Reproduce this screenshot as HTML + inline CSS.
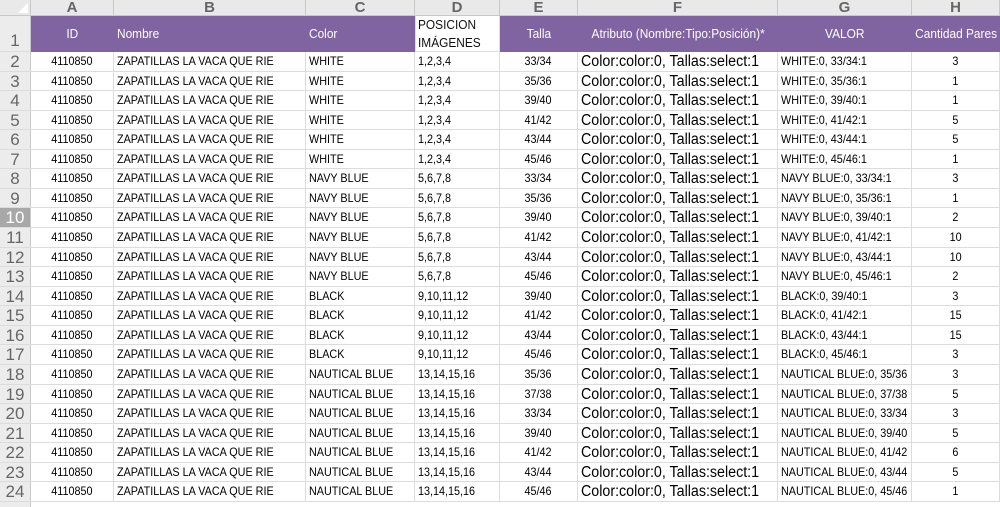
<!DOCTYPE html>
<html><head><meta charset="utf-8"><style>
*{margin:0;padding:0;box-sizing:border-box}
body{width:1000px;height:506px;overflow:hidden;background:#fff;font-family:"Liberation Sans",sans-serif;position:relative}
.r{position:absolute;left:0;width:1000px;height:19.56px;border-bottom:1px solid #dcdcdc}
.c{position:absolute;top:0;height:100%;border-right:1px solid #dcdcdc;font-size:12px;color:#000;line-height:19px;white-space:nowrap;overflow:hidden}
.c span{display:inline-block;transform:scaleX(.9);transform-origin:left center}
.ctr{text-align:center}.ctr span{transform-origin:center}
.h{background:#ececec;color:#666;font-size:17px;text-align:center;border-right:1px solid #c8c8c8}
.h span{transform:none}
.a{left:31px;width:83px}.b{left:114px;width:192px;padding-left:3px}.cc{left:306px;width:109px;padding-left:3px}
.d{left:415px;width:85px;padding-left:3px}.e{left:500px;width:78px}.f{left:578px;width:200px;padding-left:3px;font-size:15.5px}
.f span{transform:scaleX(.92)}
.g{left:778px;width:134px;padding-left:3px}.hh{left:912px;width:88px}
.rn{left:0;width:31px}
.sel{background:#a8a8a8;color:#fff}
.hd span{display:inline-block;transform:scaleX(.95)}
</style></head><body>
<div style="position:absolute;left:0;top:0;width:1000px;height:16px;background:#e9e9e9;border-bottom:1px solid #c8c8c8"></div>
<div style="position:absolute;left:0;top:0;width:31px;height:16px;border-right:1px solid #c8c8c8"></div>
<div style="position:absolute;left:18px;top:3px;width:0;height:0;border-left:10px solid transparent;border-bottom:10px solid #fff"></div>
<div style="position:absolute;top:0;height:16px;width:1000px;font-size:15px;font-weight:bold;color:#666;line-height:16px">
<div style="position:absolute;left:31px;width:83px;text-align:center;border-right:1px solid #c8c8c8;height:16px">A</div>
<div style="position:absolute;left:114px;width:192px;text-align:center;border-right:1px solid #c8c8c8;height:16px">B</div>
<div style="position:absolute;left:306px;width:109px;text-align:center;border-right:1px solid #c8c8c8;height:16px">C</div>
<div style="position:absolute;left:415px;width:85px;text-align:center;border-right:1px solid #c8c8c8;height:16px">D</div>
<div style="position:absolute;left:500px;width:78px;text-align:center;border-right:1px solid #c8c8c8;height:16px">E</div>
<div style="position:absolute;left:578px;width:200px;text-align:center;border-right:1px solid #c8c8c8;height:16px">F</div>
<div style="position:absolute;left:778px;width:134px;text-align:center;border-right:1px solid #c8c8c8;height:16px">G</div>
<div style="position:absolute;left:912px;width:88px;text-align:center;border-right:1px solid #c8c8c8;height:16px">H</div>
</div>
<div style="position:absolute;left:0;top:16px;width:31px;height:36px;background:#ececec;border-right:1px solid #c8c8c8;border-bottom:1px solid #dcdcdc;color:#666;font-size:17px;text-align:center;padding-top:15px;line-height:20px">1</div>
<div style="position:absolute;left:31px;top:16px;width:384px;height:36px;background:#8064a2"></div>
<div style="position:absolute;left:500px;top:16px;width:500px;height:36px;background:#8064a2"></div>
<div class="hd" style="position:absolute;top:16px;height:36px;width:1000px;color:#fff;font-size:12.5px;line-height:36px">
<div style="position:absolute;left:31px;width:83px;text-align:center"><span>ID</span></div>
<div style="position:absolute;left:117px"><span style="transform-origin:left">Nombre</span></div>
<div style="position:absolute;left:309px"><span style="transform-origin:left">Color</span></div>
<div style="position:absolute;left:418px;top:0;color:#111;line-height:18px"><span style="transform-origin:left">POSICION<br>IMÁGENES</span></div>
<div style="position:absolute;left:500px;width:78px;text-align:center"><span>Talla</span></div>
<div style="position:absolute;left:578px;width:200px;text-align:center"><span>Atributo (Nombre:Tipo:Posición)*</span></div>
<div style="position:absolute;left:778px;width:134px;text-align:center"><span>VALOR</span></div>
<div style="position:absolute;left:912px;width:88px;text-align:center"><span>Cantidad Pares</span></div>
</div>
<div style="position:absolute;left:415px;top:16px;width:85px;height:36px;border-right:1px solid #dcdcdc;border-left:1px solid #dcdcdc;border-bottom:1px solid #dcdcdc"></div>

<div class="r" style="top:52px"><div class="c h rn"><span>2</span></div><div class="c a ctr"><span>4110850</span></div><div class="c b"><span>ZAPATILLAS LA VACA QUE RIE</span></div><div class="c cc"><span>WHITE</span></div><div class="c d"><span>1,2,3,4</span></div><div class="c e ctr"><span>33/34</span></div><div class="c f"><span>Color:color:0, Tallas:select:1</span></div><div class="c g"><span>WHITE:0, 33/34:1</span></div><div class="c hh ctr"><span>3</span></div></div>
<div class="r" style="top:71.56px"><div class="c h rn"><span>3</span></div><div class="c a ctr"><span>4110850</span></div><div class="c b"><span>ZAPATILLAS LA VACA QUE RIE</span></div><div class="c cc"><span>WHITE</span></div><div class="c d"><span>1,2,3,4</span></div><div class="c e ctr"><span>35/36</span></div><div class="c f"><span>Color:color:0, Tallas:select:1</span></div><div class="c g"><span>WHITE:0, 35/36:1</span></div><div class="c hh ctr"><span>1</span></div></div>
<div class="r" style="top:91.12px"><div class="c h rn"><span>4</span></div><div class="c a ctr"><span>4110850</span></div><div class="c b"><span>ZAPATILLAS LA VACA QUE RIE</span></div><div class="c cc"><span>WHITE</span></div><div class="c d"><span>1,2,3,4</span></div><div class="c e ctr"><span>39/40</span></div><div class="c f"><span>Color:color:0, Tallas:select:1</span></div><div class="c g"><span>WHITE:0, 39/40:1</span></div><div class="c hh ctr"><span>1</span></div></div>
<div class="r" style="top:110.68px"><div class="c h rn"><span>5</span></div><div class="c a ctr"><span>4110850</span></div><div class="c b"><span>ZAPATILLAS LA VACA QUE RIE</span></div><div class="c cc"><span>WHITE</span></div><div class="c d"><span>1,2,3,4</span></div><div class="c e ctr"><span>41/42</span></div><div class="c f"><span>Color:color:0, Tallas:select:1</span></div><div class="c g"><span>WHITE:0, 41/42:1</span></div><div class="c hh ctr"><span>5</span></div></div>
<div class="r" style="top:130.24px"><div class="c h rn"><span>6</span></div><div class="c a ctr"><span>4110850</span></div><div class="c b"><span>ZAPATILLAS LA VACA QUE RIE</span></div><div class="c cc"><span>WHITE</span></div><div class="c d"><span>1,2,3,4</span></div><div class="c e ctr"><span>43/44</span></div><div class="c f"><span>Color:color:0, Tallas:select:1</span></div><div class="c g"><span>WHITE:0, 43/44:1</span></div><div class="c hh ctr"><span>5</span></div></div>
<div class="r" style="top:149.8px"><div class="c h rn"><span>7</span></div><div class="c a ctr"><span>4110850</span></div><div class="c b"><span>ZAPATILLAS LA VACA QUE RIE</span></div><div class="c cc"><span>WHITE</span></div><div class="c d"><span>1,2,3,4</span></div><div class="c e ctr"><span>45/46</span></div><div class="c f"><span>Color:color:0, Tallas:select:1</span></div><div class="c g"><span>WHITE:0, 45/46:1</span></div><div class="c hh ctr"><span>1</span></div></div>
<div class="r" style="top:169.36px"><div class="c h rn"><span>8</span></div><div class="c a ctr"><span>4110850</span></div><div class="c b"><span>ZAPATILLAS LA VACA QUE RIE</span></div><div class="c cc"><span>NAVY BLUE</span></div><div class="c d"><span>5,6,7,8</span></div><div class="c e ctr"><span>33/34</span></div><div class="c f"><span>Color:color:0, Tallas:select:1</span></div><div class="c g"><span>NAVY BLUE:0, 33/34:1</span></div><div class="c hh ctr"><span>3</span></div></div>
<div class="r" style="top:188.92px"><div class="c h rn"><span>9</span></div><div class="c a ctr"><span>4110850</span></div><div class="c b"><span>ZAPATILLAS LA VACA QUE RIE</span></div><div class="c cc"><span>NAVY BLUE</span></div><div class="c d"><span>5,6,7,8</span></div><div class="c e ctr"><span>35/36</span></div><div class="c f"><span>Color:color:0, Tallas:select:1</span></div><div class="c g"><span>NAVY BLUE:0, 35/36:1</span></div><div class="c hh ctr"><span>1</span></div></div>
<div class="r" style="top:208.48px"><div class="c h rn sel"><span>10</span></div><div class="c a ctr"><span>4110850</span></div><div class="c b"><span>ZAPATILLAS LA VACA QUE RIE</span></div><div class="c cc"><span>NAVY BLUE</span></div><div class="c d"><span>5,6,7,8</span></div><div class="c e ctr"><span>39/40</span></div><div class="c f"><span>Color:color:0, Tallas:select:1</span></div><div class="c g"><span>NAVY BLUE:0, 39/40:1</span></div><div class="c hh ctr"><span>2</span></div></div>
<div class="r" style="top:228.04px"><div class="c h rn"><span>11</span></div><div class="c a ctr"><span>4110850</span></div><div class="c b"><span>ZAPATILLAS LA VACA QUE RIE</span></div><div class="c cc"><span>NAVY BLUE</span></div><div class="c d"><span>5,6,7,8</span></div><div class="c e ctr"><span>41/42</span></div><div class="c f"><span>Color:color:0, Tallas:select:1</span></div><div class="c g"><span>NAVY BLUE:0, 41/42:1</span></div><div class="c hh ctr"><span>10</span></div></div>
<div class="r" style="top:247.6px"><div class="c h rn"><span>12</span></div><div class="c a ctr"><span>4110850</span></div><div class="c b"><span>ZAPATILLAS LA VACA QUE RIE</span></div><div class="c cc"><span>NAVY BLUE</span></div><div class="c d"><span>5,6,7,8</span></div><div class="c e ctr"><span>43/44</span></div><div class="c f"><span>Color:color:0, Tallas:select:1</span></div><div class="c g"><span>NAVY BLUE:0, 43/44:1</span></div><div class="c hh ctr"><span>10</span></div></div>
<div class="r" style="top:267.16px"><div class="c h rn"><span>13</span></div><div class="c a ctr"><span>4110850</span></div><div class="c b"><span>ZAPATILLAS LA VACA QUE RIE</span></div><div class="c cc"><span>NAVY BLUE</span></div><div class="c d"><span>5,6,7,8</span></div><div class="c e ctr"><span>45/46</span></div><div class="c f"><span>Color:color:0, Tallas:select:1</span></div><div class="c g"><span>NAVY BLUE:0, 45/46:1</span></div><div class="c hh ctr"><span>2</span></div></div>
<div class="r" style="top:286.72px"><div class="c h rn"><span>14</span></div><div class="c a ctr"><span>4110850</span></div><div class="c b"><span>ZAPATILLAS LA VACA QUE RIE</span></div><div class="c cc"><span>BLACK</span></div><div class="c d"><span>9,10,11,12</span></div><div class="c e ctr"><span>39/40</span></div><div class="c f"><span>Color:color:0, Tallas:select:1</span></div><div class="c g"><span>BLACK:0, 39/40:1</span></div><div class="c hh ctr"><span>3</span></div></div>
<div class="r" style="top:306.28px"><div class="c h rn"><span>15</span></div><div class="c a ctr"><span>4110850</span></div><div class="c b"><span>ZAPATILLAS LA VACA QUE RIE</span></div><div class="c cc"><span>BLACK</span></div><div class="c d"><span>9,10,11,12</span></div><div class="c e ctr"><span>41/42</span></div><div class="c f"><span>Color:color:0, Tallas:select:1</span></div><div class="c g"><span>BLACK:0, 41/42:1</span></div><div class="c hh ctr"><span>15</span></div></div>
<div class="r" style="top:325.84px"><div class="c h rn"><span>16</span></div><div class="c a ctr"><span>4110850</span></div><div class="c b"><span>ZAPATILLAS LA VACA QUE RIE</span></div><div class="c cc"><span>BLACK</span></div><div class="c d"><span>9,10,11,12</span></div><div class="c e ctr"><span>43/44</span></div><div class="c f"><span>Color:color:0, Tallas:select:1</span></div><div class="c g"><span>BLACK:0, 43/44:1</span></div><div class="c hh ctr"><span>15</span></div></div>
<div class="r" style="top:345.4px"><div class="c h rn"><span>17</span></div><div class="c a ctr"><span>4110850</span></div><div class="c b"><span>ZAPATILLAS LA VACA QUE RIE</span></div><div class="c cc"><span>BLACK</span></div><div class="c d"><span>9,10,11,12</span></div><div class="c e ctr"><span>45/46</span></div><div class="c f"><span>Color:color:0, Tallas:select:1</span></div><div class="c g"><span>BLACK:0, 45/46:1</span></div><div class="c hh ctr"><span>3</span></div></div>
<div class="r" style="top:364.96px"><div class="c h rn"><span>18</span></div><div class="c a ctr"><span>4110850</span></div><div class="c b"><span>ZAPATILLAS LA VACA QUE RIE</span></div><div class="c cc"><span>NAUTICAL BLUE</span></div><div class="c d"><span>13,14,15,16</span></div><div class="c e ctr"><span>35/36</span></div><div class="c f"><span>Color:color:0, Tallas:select:1</span></div><div class="c g"><span>NAUTICAL BLUE:0, 35/36</span></div><div class="c hh ctr"><span>3</span></div></div>
<div class="r" style="top:384.52px"><div class="c h rn"><span>19</span></div><div class="c a ctr"><span>4110850</span></div><div class="c b"><span>ZAPATILLAS LA VACA QUE RIE</span></div><div class="c cc"><span>NAUTICAL BLUE</span></div><div class="c d"><span>13,14,15,16</span></div><div class="c e ctr"><span>37/38</span></div><div class="c f"><span>Color:color:0, Tallas:select:1</span></div><div class="c g"><span>NAUTICAL BLUE:0, 37/38</span></div><div class="c hh ctr"><span>5</span></div></div>
<div class="r" style="top:404.08px"><div class="c h rn"><span>20</span></div><div class="c a ctr"><span>4110850</span></div><div class="c b"><span>ZAPATILLAS LA VACA QUE RIE</span></div><div class="c cc"><span>NAUTICAL BLUE</span></div><div class="c d"><span>13,14,15,16</span></div><div class="c e ctr"><span>33/34</span></div><div class="c f"><span>Color:color:0, Tallas:select:1</span></div><div class="c g"><span>NAUTICAL BLUE:0, 33/34</span></div><div class="c hh ctr"><span>3</span></div></div>
<div class="r" style="top:423.64px"><div class="c h rn"><span>21</span></div><div class="c a ctr"><span>4110850</span></div><div class="c b"><span>ZAPATILLAS LA VACA QUE RIE</span></div><div class="c cc"><span>NAUTICAL BLUE</span></div><div class="c d"><span>13,14,15,16</span></div><div class="c e ctr"><span>39/40</span></div><div class="c f"><span>Color:color:0, Tallas:select:1</span></div><div class="c g"><span>NAUTICAL BLUE:0, 39/40</span></div><div class="c hh ctr"><span>5</span></div></div>
<div class="r" style="top:443.2px"><div class="c h rn"><span>22</span></div><div class="c a ctr"><span>4110850</span></div><div class="c b"><span>ZAPATILLAS LA VACA QUE RIE</span></div><div class="c cc"><span>NAUTICAL BLUE</span></div><div class="c d"><span>13,14,15,16</span></div><div class="c e ctr"><span>41/42</span></div><div class="c f"><span>Color:color:0, Tallas:select:1</span></div><div class="c g"><span>NAUTICAL BLUE:0, 41/42</span></div><div class="c hh ctr"><span>6</span></div></div>
<div class="r" style="top:462.76px"><div class="c h rn"><span>23</span></div><div class="c a ctr"><span>4110850</span></div><div class="c b"><span>ZAPATILLAS LA VACA QUE RIE</span></div><div class="c cc"><span>NAUTICAL BLUE</span></div><div class="c d"><span>13,14,15,16</span></div><div class="c e ctr"><span>43/44</span></div><div class="c f"><span>Color:color:0, Tallas:select:1</span></div><div class="c g"><span>NAUTICAL BLUE:0, 43/44</span></div><div class="c hh ctr"><span>5</span></div></div>
<div class="r" style="top:482.32px"><div class="c h rn"><span>24</span></div><div class="c a ctr"><span>4110850</span></div><div class="c b"><span>ZAPATILLAS LA VACA QUE RIE</span></div><div class="c cc"><span>NAUTICAL BLUE</span></div><div class="c d"><span>13,14,15,16</span></div><div class="c e ctr"><span>45/46</span></div><div class="c f"><span>Color:color:0, Tallas:select:1</span></div><div class="c g"><span>NAUTICAL BLUE:0, 45/46</span></div><div class="c hh ctr"><span>1</span></div></div>
<div style="position:absolute;left:0;top:501.88px;width:31px;height:5px;background:#ececec;border-right:1px solid #c8c8c8"></div>
</body></html>
